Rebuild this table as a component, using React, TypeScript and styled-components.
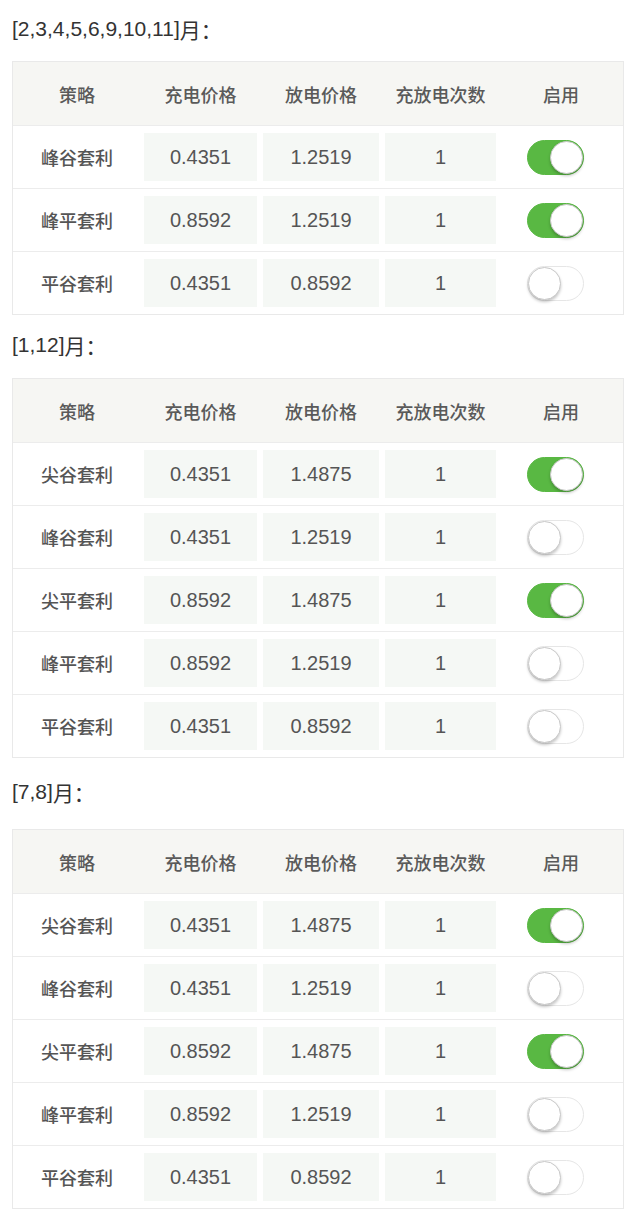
import React from 'react'
import styled, { createGlobalStyle } from 'styled-components'

const GlobalStyle = createGlobalStyle`
  html, body { margin: 0; padding: 0; background: #fff; }
  body { font-family: "Liberation Sans", "Noto Sans CJK SC", sans-serif; color: #555; }
`

const Page = styled.div`
  padding: 0 16px 0 12px;
  width: 640px;
  box-sizing: border-box;
`

const Section = styled.section`
  display: flex;
  flex-direction: column;
`

const Title = styled.div`
  height: ${p => p.h || 64}px;
  display: flex;
  align-items: center;
  padding-bottom: 3px;
  box-sizing: border-box;
  font-size: 21px;
  color: #333;
  span { font-family: "Noto Sans CJK SC", sans-serif; }
`

const Table = styled.div`
  border: 1px solid #e9e9e9;
  display: flex;
  flex-direction: column;
`

const Row = styled.div`
  display: grid;
  grid-template-columns: 128px 119px 122px 117px 1fr;
  height: 63px;
  box-sizing: border-box;
  background: ${p => (p.head ? '#f6f6f3' : '#fff')};
  & + & { border-top: 1px solid #ececec; }
`

const Head = styled.div`
  display: flex;
  align-items: center;
  justify-content: center;
  font-family: "Noto Sans CJK SC", sans-serif;
  font-size: 18px;
  font-weight: 500;
  color: #5a5a5a;
`

const Name = styled(Head)`
  color: #555;
`

const Cell = styled.div`
  padding: 7px 3px;
  display: flex;
`

const Box = styled.div`
  flex: 1;
  display: flex;
  align-items: center;
  justify-content: center;
  background: #f5f8f5;
  font-size: 20px;
  color: #555;
`

const SwitchCell = styled.div`
  display: flex;
  align-items: center;
  justify-content: center;
  padding-right: 12px;
`

const Track = styled.div`
  position: relative;
  width: 57px;
  height: 35px;
  border-radius: 18px;
  box-sizing: border-box;
  background: ${p => (p.on ? '#59b843' : '#fff')};
  border: 1px solid ${p => (p.on ? '#59b843' : '#e6e6e6')};
`

const Knob = styled.div`
  position: absolute;
  top: 0;
  left: ${p => (p.on ? '22px' : '0')};
  width: 33px;
  height: 33px;
  border-radius: 50%;
  background: #fff;
  box-sizing: border-box;
  border: 1px solid #c8c8c8;
  box-shadow: 0 2px 3px rgba(0, 0, 0, 0.22);
`

const Toggle = ({ on }) => (
  <Track on={on}>
    <Knob on={on} />
  </Track>
)

const heads = ['策略', '充电价格', '放电价格', '充放电次数', '启用']

const sections = [
  {
    months: '[2,3,4,5,6,9,10,11]',
    gap: 61,
    rows: [
      ['峰谷套利', '0.4351', '1.2519', '1', true],
      ['峰平套利', '0.8592', '1.2519', '1', true],
      ['平谷套利', '0.4351', '0.8592', '1', false]
    ]
  },
  {
    months: '[1,12]',
    gap: 63,
    rows: [
      ['尖谷套利', '0.4351', '1.4875', '1', true],
      ['峰谷套利', '0.4351', '1.2519', '1', false],
      ['尖平套利', '0.8592', '1.4875', '1', true],
      ['峰平套利', '0.8592', '1.2519', '1', false],
      ['平谷套利', '0.4351', '0.8592', '1', false]
    ]
  },
  {
    months: '[7,8]',
    gap: 71,
    rows: [
      ['尖谷套利', '0.4351', '1.4875', '1', true],
      ['峰谷套利', '0.4351', '1.2519', '1', false],
      ['尖平套利', '0.8592', '1.4875', '1', true],
      ['峰平套利', '0.8592', '1.2519', '1', false],
      ['平谷套利', '0.4351', '0.8592', '1', false]
    ]
  }
]

export default function App() {
  return (
    <Page>
      <GlobalStyle />
      {sections.map(s => (
        <Section key={s.months}>
          <Title h={s.gap}>
            {s.months}
            <span>月：</span>
          </Title>
          <Table>
            <Row head>
              {heads.map(h => (
                <Head key={h}>{h}</Head>
              ))}
            </Row>
            {s.rows.map((r, i) => (
              <Row key={i}>
                <Name>{r[0]}</Name>
                <Cell><Box>{r[1]}</Box></Cell>
                <Cell><Box>{r[2]}</Box></Cell>
                <Cell><Box>{r[3]}</Box></Cell>
                <SwitchCell>
                  <Toggle on={r[4]} />
                </SwitchCell>
              </Row>
            ))}
          </Table>
        </Section>
      ))}
    </Page>
  )
}
